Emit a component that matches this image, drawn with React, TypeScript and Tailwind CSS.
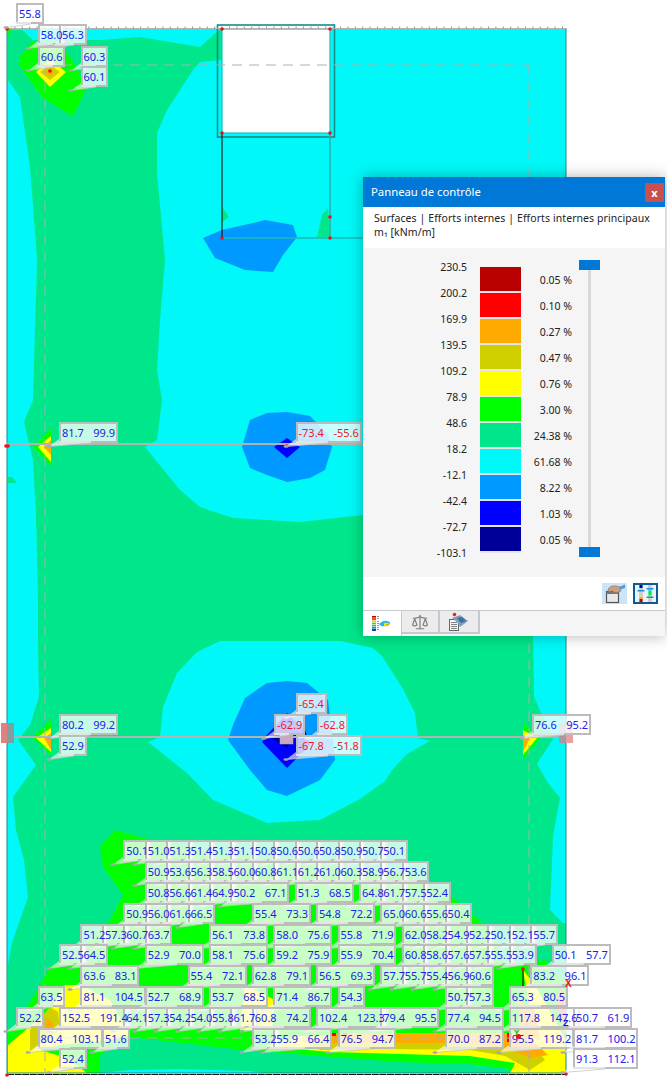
import React from "react";
import { Scale } from "lucide-react";

type L = { x: number; y: number; v: string[]; red?: boolean };
const X = (k: number) => 123.3 + 21.42 * k;
const RY = [840, 861, 882, 903, 923.5, 944, 965, 986, 1007, 1027.5, 1048];
const singles = (row: number, k: number, vals: string[]): L[] => vals.map((s, i) => ({ x: X(k + i), y: RY[row], v: [s] }));
const dbl = (row: number, k: number, a: string, b: string): L => ({ x: X(k), y: RY[row], v: [a, b] });

const labels: L[] = [
  { x: 16, y: 3, v: ["55.8"] },
  { x: 37.7, y: 24, v: ["58.0"] },
  { x: 59, y: 24, v: ["56.3"] },
  { x: 37.7, y: 45.6, v: ["60.6"] },
  { x: 80.5, y: 45.6, v: ["60.3"] },
  { x: 80.5, y: 66, v: ["60.1"] },
  { x: 59, y: 421.7, v: ["81.7", "99.9"] },
  { x: 295.5, y: 421.7, v: ["-73.4", "-55.6"], red: true },
  { x: 59, y: 714, v: ["80.2", "99.2"] },
  { x: 59, y: 735, v: ["52.9"] },
  { x: 295.5, y: 693, v: ["-65.4"], red: true },
  { x: 274, y: 714, v: ["-62.9"], red: true },
  { x: 316.7, y: 714, v: ["-62.8"], red: true },
  { x: 295.5, y: 735, v: ["-67.8", "-51.8"], red: true },
  { x: 532, y: 714, v: ["76.6", "95.2"] },
  ...singles(0, 0, ["50.1", "51.0", "51.3", "51.4", "51.3", "51.1", "50.8", "50.6", "50.6", "50.8", "50.9", "50.7", "50.1"]),
  ...singles(1, 1, ["50.9", "53.6", "56.3", "58.5", "60.0", "60.8", "61.1", "61.2", "61.0", "60.3", "58.9", "56.7", "53.6"]),
  ...singles(2, 1, ["50.8", "56.6", "61.4", "64.9"]),
  dbl(2, 5, "50.2", "67.1"),
  dbl(2, 8, "51.3", "68.5"),
  ...singles(2, 11, ["64.8", "61.7", "57.5", "52.4"]),
  ...singles(3, 0, ["50.9", "56.0", "61.6", "66.5"]),
  dbl(3, 6, "55.4", "73.3"),
  dbl(3, 9, "54.8", "72.2"),
  ...singles(3, 12, ["65.0", "60.6", "55.6", "50.4"]),
  ...singles(4, -2, ["51.2", "57.3", "60.7", "63.7"]),
  dbl(4, 4, "56.1", "73.8"),
  dbl(4, 7, "58.0", "75.6"),
  dbl(4, 10, "55.8", "71.9"),
  ...singles(4, 13, ["62.0", "58.2", "54.9", "52.2", "50.1", "52.1", "55.7"]),
  ...singles(5, -3, ["52.5", "64.5"]),
  dbl(5, 1, "52.9", "70.0"),
  dbl(5, 4, "58.1", "75.6"),
  dbl(5, 7, "59.2", "75.9"),
  dbl(5, 10, "55.9", "70.4"),
  ...singles(5, 13, ["60.8", "58.6", "57.6", "57.5", "55.5", "53.9"]),
  dbl(5, 20, "50.1", "57.7"),
  dbl(6, -2, "63.6", "83.1"),
  dbl(6, 3, "55.4", "72.1"),
  dbl(6, 6, "62.8", "79.1"),
  dbl(6, 9, "56.5", "69.3"),
  ...singles(6, 12, ["57.7", "55.7", "55.4", "56.9", "60.6"]),
  dbl(6, 19, "83.2", "96.1"),
  ...singles(7, -4, ["63.5"]),
  dbl(7, -2, "81.1", "104.5"),
  dbl(7, 1, "52.7", "68.9"),
  dbl(7, 4, "53.7", "68.5"),
  dbl(7, 7, "71.4", "86.7"),
  ...singles(7, 10, ["54.3"]),
  ...singles(7, 15, ["50.7", "57.3"]),
  dbl(7, 18, "65.3", "80.5"),
  ...singles(8, -5, ["52.2"]),
  dbl(8, -3, "152.5", "191.4"),
  ...singles(8, 0, ["64.1", "57.3", "54.2", "54.0", "55.8", "61.7"]),
  dbl(8, 6, "60.8", "74.2"),
  dbl(8, 9, "102.4", "123.3"),
  dbl(8, 12, "79.4", "95.5"),
  dbl(8, 15, "77.4", "94.5"),
  dbl(8, 18, "117.8", "147.6"),
  dbl(8, 21, "50.7", "61.9"),
  dbl(9, -4, "80.4", "103.1"),
  ...singles(9, -1, ["51.6"]),
  ...singles(9, 6, ["53.2"]),
  dbl(9, 7, "55.9", "66.4"),
  dbl(9, 10, "76.5", "94.7"),
  dbl(9, 15, "70.0", "87.2"),
  dbl(9, 18, "95.5", "119.2"),
  dbl(9, 21, "81.7", "100.2"),
  ...singles(10, -3, ["52.4"]),
  dbl(10, 21, "91.3", "112.1"),
];

const C = { cyan: "#00f8f8", green: "#00e68a", blue: "#0099ff", dblue: "#0000ff", navy: "#000099", lime: "#00ff00", yellow: "#ffff00", olive: "#d0d000", orange: "#ffaa00", red: "#ff0000" };

function Contours() {
  const dots = [[7, 29], [222, 29], [330, 29], [222, 133], [330, 133], [222, 238], [330, 238], [330, 217], [6, 446], [8, 446], [287, 446], [50, 71], [523, 969], [566, 1074], [7, 1075]];
  return (
    <svg className="absolute left-0 top-0" width={667} height={1078} viewBox="0 0 667 1078">
      <rect x={7} y={28} width={559} height={1045} fill={C.cyan} />
      <polygon fill={C.green} points="22,30 33,40 100,40 140,37 200,47 217,32 222,29 222,60 200,62 193,70 167,110 157,133 157,173 165,260 160,320 157,370 162,400 157,440 145,447 180,490 200,507 233,518 300,522 363,515 450,560 533,636 534,696 540,711 553,739 537,764 548,783 560,798 553,836 550,910 563,923 566,923 566,1073 8,1073 8,965 12,943 28,897 24,860 16,830 13,797 36,765 18,740 30,725 39,697 38,640 38,600 36,516 33,460 24,422 33,400 37,260 30,167 20,97 8,80 8,30" />
      <polygon fill={C.green} points="8,477 12,477 17,483 8,483" />
      <polygon fill={C.green} points="222,207 229,217 222,222" />
      <polygon fill={C.green} points="317,237 322,215 328,208 330,237" />
      <polygon fill={C.lime} points="8,29 12,29 9,35 8,35" />
      <polygon fill={C.blue} points="203,238 222,230 253,223 265,220 293,225 297,237 283,255 273,272 245,270 215,258" />
      <polygon fill={C.blue} points="250,420 267,413 287,412 310,416 328,435 332,447 325,470 310,478 287,482 267,475 250,468 242,447 247,430" />
      <polygon fill={C.dblue} points="287,438 300,447 287,458 274,447" />
      <polygon fill={C.cyan} points="220,641 340,641 373,648 382,656 403,689 415,713 418,738 430,741 407,754 393,769 385,781 360,799 320,820 267,823 213,800 187,773 148,742 160,737 163,707 177,673 197,652" />
      <polygon fill={C.blue} points="245,698 267,683 287,681 307,683 328,700 333,740 335,760 320,780 287,796 267,790 250,770 228,740 233,725" />
      <polygon fill={C.dblue} points="287,713 305,730 310,745 287,768 262,742 267,735" />
      <polygon fill={C.navy} points="285,728 293,738 287,748 272,738" />
      <polygon fill={C.cyan} points="100,1073 130,1070 180,1069 250,1071 262,1073" />
      <polygon fill={C.lime} points="115,830 140,837 200,850 300,862 400,872 450,895 490,930 505,965 545,960 566,985 566,1073 515,1073 505,1068 470,1064 400,1062 333,1057 243,1050 130,1037 100,1055 100,1073 8,1073 8,1030 15,1027 37,990 50,967 80,950 110,920 123,895 103,867 100,847" />
      <polygon fill={C.yellow} points="8,1045 28,1028 50,1010 65,985 80,985 110,1000 130,1035 110,1040 60,1045 40,1050 67,1058 87,1073 8,1073" />
      <polygon fill={C.olive} points="30,1030 50,1007 58,1012 60,1030 30,1052" />
      <polygon fill={C.orange} points="47,1018 54,1024 52,1032 44,1030" />
      <polygon fill={C.yellow} points="245,985 275,1000 272,1030 240,1030" />
      <polygon fill={C.yellow} points="265,1046 300,1036 525,1034 530,1010 523,970 535,985 566,1040 566,1073 510,1073 515,1063 470,1056 400,1054 330,1052" />
      <polygon fill={C.olive} points="300,1040 525,1034 545,1060 530,1070 505,1056 470,1050 380,1049 320,1050" />
      <polygon fill={C.orange} points="330,1033 525,1033 548,1055 530,1058 505,1048 470,1043 330,1043" />
      <polygon fill={C.orange} points="518,1000 535,1010 540,1040 520,1035" />
      <rect x={330} y={1033} width={6} height={3} fill={C.red} />
      <rect x={343} y={1033} width={4} height={3} fill={C.red} />
      <rect x={507} y={1033} width={5} height={9} fill={C.red} />
      <polygon fill="#f06060" points="560,985 566,1000 566,1030 556,1008" />
      <polygon fill={C.lime} points="51,428 51,466 33,447" />
      <polygon fill={C.yellow} points="51,436 51,462 38,447" />
      <polygon fill={C.orange} points="51,440 51,455 44,447" />
      <polygon fill={C.lime} points="51,720 51,755 32,738" />
      <polygon fill={C.yellow} points="51,728 51,752 36,738" />
      <polygon fill={C.orange} points="51,733 51,750 44,738" />
      <polygon fill={C.lime} points="523,722 540,738 523,760" />
      <polygon fill={C.yellow} points="523,730 537,738 523,755" />
      <polygon fill={C.orange} points="523,735 530,738 523,752" />
      <polygon fill={C.lime} points="32,42 20,57 20,67 43,98 72,116 78,107 85,90 77,67 63,47 43,43" />
      <polygon fill={C.yellow} points="50,59 66,72 50,87 36,72" />
      <polygon fill={C.olive} points="50,65 60,72 50,80 40,72" />
      <polygon fill={C.orange} points="50,68 54,72 50,76 46,72" />
      <rect x={222} y={29} width={108} height={104} fill="#ffffff" />
      <rect x={222} y={29} width={108} height={104} fill="none" stroke="#22bcbc" strokeWidth={1.2} />
      <rect x={217.5} y={25} width={117} height={112} fill="none" stroke="#178a8a" strokeWidth={1.6} />
      <line x1={330} y1={133} x2={330} y2={238} stroke="#1fb0b0" strokeWidth={1.5} />
      <line x1={222} y1={238} x2={363} y2={238} stroke="#1fb8b8" strokeWidth={1.3} />
      <line x1={222} y1={133} x2={222} y2={238} stroke="#000000" strokeWidth={1} />
      <line x1={523} y1={969} x2={523} y2={990} stroke="#000000" strokeWidth={1} />
      <line x1={7} y1={28} x2={7} y2={1073} stroke="#178a8a" strokeWidth={1} />
      <line x1={566} y1={28} x2={566} y2={1073} stroke="#178a8a" strokeWidth={1} />
      <line x1={7} y1={1073} x2={566} y2={1073} stroke="#178a8a" strokeWidth={1} />
      <line x1={7} y1={1074.5} x2={566} y2={1074.5} stroke="#111111" strokeWidth={1} strokeDasharray="7 0.6" />
      <line x1={7} y1={28.5} x2={566} y2={28.5} stroke="#b4b4b4" strokeWidth={1} />
      <line x1={7} y1={27.5} x2={566} y2={27.5} stroke="#8a9a9a" strokeWidth={2} strokeDasharray="1 6.4" />
      <g stroke="#a8b0b0" strokeWidth={1} fill="none" strokeDasharray="10 7">
        <line x1={45} y1={65} x2={529} y2={65} />
        <line x1={45} y1={65} x2={45} y2={1073} />
        <line x1={529} y1={65} x2={529} y2={1073} />
        <line x1={45} y1={1038} x2={529} y2={1038} />
      </g>
      <line x1={7} y1={444} x2={566} y2={444} stroke="#b2b4b4" strokeWidth={2} />
      <line x1={7} y1={737} x2={566} y2={737} stroke="#b2b4b4" strokeWidth={2} />
      <rect x={1} y={723} width={6} height={20} fill="#e08080" />
      <rect x={7} y={723} width={7} height={20} fill="#80a0a0" />
      <rect x={559} y={723} width={7} height={20} fill="#a09ca0" />
      <rect x={566} y={723} width={7} height={20} fill="#e8a0a0" />
      <rect x={280} y={735} width={13} height={9} fill="#c8a8c0" stroke="#aaaaaa" strokeWidth={0.5} />
      {dots.map(([x, y], i) => (
        <circle key={i} cx={x} cy={y} r={1.8} fill="#ee1111" />
      ))}
    </svg>
  );
}

const tw = (s: string) => {
  let w = 0;
  for (const ch of s) w += ch === "." ? 2.86 : ch === "-" ? 3.55 : 6.29;
  return w;
};
const boxW = (v: string[]) => 6 + v.reduce((a, s) => a + tw(s), 0) + (v.length - 1) * 9.5;

function LabelBox({ x, y, v }: L) {
  const h = 21;
  const base = v.length > 1 ? 32 : 15;
  return (
    <div
      className="absolute h-[21px] border-2 border-[#bcbcbc] bg-[rgba(255,255,255,0.78)]"
      style={{ left: x, top: y, width: boxW(v) }}
    >
      <svg className="absolute -left-[2px] -top-[2px] overflow-visible" width={1} height={1}>
        <polygon points={`0,${h - 4} -10,${h + 3.5} ${base},${h} ${base},${h - 2} 0,${h - 2}`} fill="rgba(255,255,255,0.6)" />
        <polyline points={`-10,${h + 3.5} ${base},${h}`} fill="none" stroke="#c4c4c4" strokeWidth={0.8} />
        <ellipse cx={-10} cy={h + 3.5} rx={2.6} ry={1.3} fill="#a8a8a8" />
      </svg>
    </div>
  );
}

function LabelText({ x, y, v, red }: L) {
  return (
    <div
      className={`absolute h-[21px] flex items-center gap-[9.5px] pl-[3px] whitespace-nowrap text-[11px] leading-none font-['Noto_Sans',sans-serif] ${red ? "text-[#f01828]" : "text-[#2020e8]"}`}
      style={{ left: x, top: y }}
    >
      {v.map((s, i) => (
        <span key={i}>{s}</span>
      ))}
    </div>
  );
}

const vals = ["230.5", "200.2", "169.9", "139.5", "109.2", "78.9", "48.6", "18.2", "-12.1", "-42.4", "-72.7", "-103.1"];
const rows = [
  ["bg-[#b80000]", "0.05 %"],
  ["bg-[#ff0000]", "0.10 %"],
  ["bg-[#ffaa00]", "0.27 %"],
  ["bg-[#d0d000]", "0.47 %"],
  ["bg-[#ffff00]", "0.76 %"],
  ["bg-[#00ff00]", "3.00 %"],
  ["bg-[#00e68a]", "24.38 %"],
  ["bg-[#00f8f8]", "61.68 %"],
  ["bg-[#0099ff]", "8.22 %"],
  ["bg-[#0000ff]", "1.03 %"],
  ["bg-[#000099]", "0.05 %"],
];

function ClipIcon() {
  return (
    <svg width={25} height={21} viewBox="0 0 25 21">
      <rect x={4.5} y={8.5} width={12} height={11} fill="#e8e8e8" stroke="#555" strokeWidth={1.2} />
      <rect x={4.5} y={8.5} width={12} height={2.5} fill="#777" />
      <path d="M6 6 Q9 2 14 3 L18 4 L19 8 L14 10 L10 8 L7 9 Z" fill="#c9a184" stroke="#8a6a54" strokeWidth={0.6} />
      <path d="M17 4 L23 1.5 L23 5 L18 6.5 Z" fill="#5a9ad0" />
    </svg>
  );
}

function LegendToggleIcon() {
  return (
    <svg width={21} height={17} viewBox="0 0 21 17">
      <rect x={4} y={0} width={4} height={17} fill="#cfcfcf" />
      <rect x={13} y={0} width={4} height={17} fill="#cfcfcf" />
      <rect x={4.5} y={0} width={3} height={3} fill="#000099" />
      <rect x={2.5} y={5} width={7} height={1.5} fill="#1a8fe0" />
      <rect x={4.5} y={12} width={3} height={2} fill="#ffaa00" />
      <rect x={4.5} y={14} width={3} height={3} fill="#cc0000" />
      <rect x={11.5} y={3} width={7} height={1.5} fill="#1a8fe0" />
      <rect x={13.5} y={4.5} width={3} height={2.5} fill="#00e0e0" />
      <rect x={13.5} y={7} width={3} height={3} fill="#00ee44" />
      <rect x={13.5} y={10} width={3} height={1.5} fill="#aaee00" />
      <rect x={11.5} y={11.5} width={7} height={1.5} fill="#1a8fe0" />
    </svg>
  );
}

function ColorsTabIcon() {
  const c = ["#b80000", "#ee2200", "#ffcc00", "#44dd00", "#00cc66", "#0088ee", "#000099"];
  return (
    <svg width={20} height={16} viewBox="0 0 20 16">
      {c.map((f, i) => (
        <rect key={i} x={0} y={i * 2.2} width={4} height={1.6} fill={f} />
      ))}
      {[0, 2, 5, 7, 9, 11, 13].map((y) => (
        <rect key={y} x={5} y={y} width={2} height={0.8} fill="#777" />
      ))}
      <path d="M7 8 Q11 4 15 5 Q19 6 18 8 Q15 11 12 10 Q9 11 7 8 Z" fill="#22b8ee" />
      <path d="M12 7 Q15 6 18 8 Q15 11 12 10 Z" fill="#e8e800" />
      <path d="M14 8.5 L17 8 L15 10 Z" fill="#ee8800" />
    </svg>
  );
}

function ResultTabIcon() {
  return (
    <svg width={22} height={20} viewBox="0 0 22 20">
      <rect x={1.5} y={7.5} width={9} height={11} fill="#f4f4f4" stroke="#666" strokeWidth={1} />
      <path d="M3 10.5h6M3 12.5h6M3 14.5h6M3 16.5h6" stroke="#666" strokeWidth={0.8} />
      <path d="M4 6 L12 3 L20 9 L12 15 L10 11 Z" fill="#7f9fc0" />
      <path d="M9 6 L14 5 L18 9 L13 11 Z" fill="#3c6ea0" />
      <circle cx={6.5} cy={2.5} r={1.8} fill="#ee2222" />
    </svg>
  );
}

function Panel() {
  return (
    <div className="absolute left-[363px] top-[177px] w-[302px] h-[459px] flex flex-col shadow-[0_0_14px_rgba(0,0,0,0.3)] font-['Noto_Sans',sans-serif] text-[#222222] text-[10.5px]">
      <div className="h-[30px] bg-[#0078d7] flex items-center justify-between pl-[8px] pr-[1px] text-white">
        <span className="text-[11.3px]">Panneau de contrôle</span>
        <span className="w-[19px] h-[19px] bg-[#c75050] flex items-center justify-center text-[11px] font-bold leading-none">x</span>
      </div>
      <div className="h-[41px] bg-white pl-[11px] pt-[4px] text-[10.5px] leading-[14px] tracking-[0.08px] whitespace-nowrap">
        <div>Surfaces | Efforts internes | Efforts internes principaux</div>
        <div>m₁ [kNm/m]</div>
      </div>
      <div className="flex-1 bg-[#f5f5f5] flex items-start">
        <div className="w-[104px] pt-[12px] flex flex-col gap-[12px] items-end">
          {vals.map((s) => (
            <div key={s} className="h-[14px] leading-[14px]">{s}</div>
          ))}
        </div>
        <div className="ml-[13px] w-[41px] pt-[19px] flex flex-col">
          {rows.map(([c], i) => (
            <div key={i} className={`h-[26px] border-b-2 border-[#e8e4e8] ${c}`} />
          ))}
        </div>
        <div className="w-[51px] pt-[19px] flex flex-col items-end">
          {rows.map(([, p], i) => (
            <div key={i} className="h-[26px] leading-[26px]">{p}</div>
          ))}
        </div>
        <div className="ml-[7px] mt-[12px] relative w-[21px] h-[297px] flex flex-col justify-between items-center">
          <div className="absolute top-[4px] bottom-0 w-[3px] bg-[#d8d8d8]" />
          <div className="relative w-[21px] h-[10px] bg-[#0078d7]" />
          <div className="relative w-[21px] h-[10px] bg-[#0078d7]" />
        </div>
      </div>
      <div className="h-[33px] bg-white flex items-center justify-end gap-[6px] pr-[7px]">
        <div className="w-[25px] h-[21px] bg-[#cce4f7] flex items-center justify-center"><ClipIcon /></div>
        <div className="w-[25px] h-[21px] border-2 border-[#0f5a92] bg-[#eaf3fa] flex items-center justify-center"><LegendToggleIcon /></div>
      </div>
      <div className="h-[26px] bg-[#f5f5f5] border-t border-[#c8c8d0] flex items-start">
        <div className="w-[39px] h-[25px] bg-white border-r border-[#c8c8d0] flex items-center justify-center"><ColorsTabIcon /></div>
        <div className="w-[38px] h-[23px] bg-[#ececec] border-r-2 border-b-2 border-[#c8c8d0] flex items-center justify-center text-[#808080]"><Scale size={18} strokeWidth={1.6} /></div>
        <div className="w-[40px] h-[23px] bg-[#ececec] border-r-2 border-b-2 border-[#c8c8d0] flex items-center justify-center"><ResultTabIcon /></div>
      </div>
    </div>
  );
}

export default function App() {
  return (
    <div className="relative w-[667px] h-[1078px] bg-white overflow-hidden">
      <Contours />
      {labels.map((l, i) => (
        <LabelBox key={i} {...l} />
      ))}
      {labels.map((l, i) => (
        <LabelText key={i} {...l} />
      ))}
      <span className="absolute left-[565px] top-[979px] text-[10px] font-bold leading-none text-[#ee1111] font-['Liberation_Sans',sans-serif]">X</span>
      <span className="absolute left-[563px] top-[1019px] text-[9px] font-bold leading-none text-[#1111dd] font-['Liberation_Sans',sans-serif]">Z</span>
      <span className="absolute left-[514px] top-[1029px] text-[8px] font-bold leading-none text-[#22aa22] font-['Liberation_Sans',sans-serif]">Y</span>
      <span className="absolute left-[516px] top-[1034px] w-[5px] h-[5px] rounded-full bg-[#ee1111]" />
      <Panel />
    </div>
  );
}
